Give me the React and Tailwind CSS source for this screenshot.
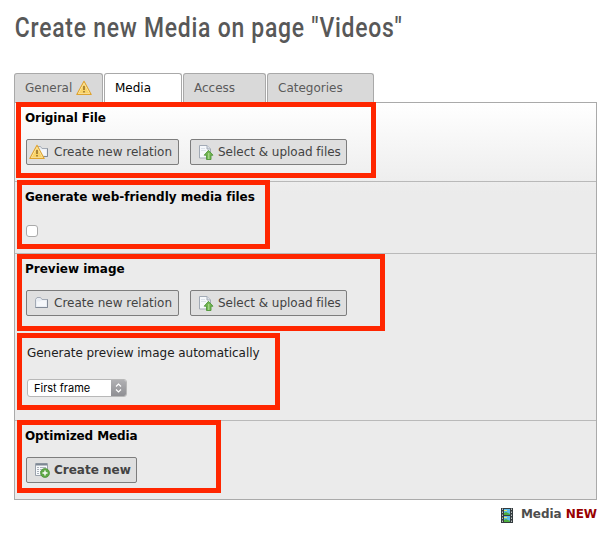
import React from "react";

function Warning({ className = "" }) {
  return (
    <svg width="16" height="16" viewBox="0 0 16 16" className={className}>
      <path d="M8 1.3 15.2 14.4H.8Z" fill="#fff3c4" stroke="#dfa32e" strokeWidth="1.1" strokeLinejoin="round" />
      <path d="M8 3.6 13.3 13.2H2.7Z" fill="#f9d367" />
      <path d="M8 6v4" stroke="#8a6420" strokeWidth="1.4" />
      <path d="M8 11v1.5" stroke="#8a6420" strokeWidth="1.4" />
    </svg>
  );
}

function Folder({ className = "" }) {
  return (
    <svg width="16" height="16" viewBox="0 0 16 16" className={className}>
      <path d="M1.5 12.5v-8L3 2.5h3.5L8 4.5h5.5v8Z" fill="#e9edf3" stroke="#a3aab5" />
      <path d="M3 6.5h3l1.5-1H12v5.5H3Z" fill="#f5f7fa" />
      <path d="M1.5 12.5h12v-8" fill="none" stroke="#828a97" />
    </svg>
  );
}

function Upload() {
  return (
    <svg width="16" height="16" viewBox="0 0 16 16">
      <path d="M1.5 1.5H9L12.5 5v9H1.5Z" fill="#f5f8fb" stroke="#a2aab5" />
      <path d="M9 1.5V5h3.5" fill="#dce2ea" stroke="#a2aab5" />
      <path d="M3 4.5h4M3 6.5h5" stroke="#dce2ea" />
      <path d="M10.5 6.3 15 11.2H13V15.500H8.500V11.200H6.200Z" fill="#72b552" stroke="#4f963a" strokeWidth=".9" strokeLinejoin="round" />
      <path d="M10.700 9v6" stroke="#a0d485" strokeWidth="1.400" />
    </svg>
  );
}

function AddRecord() {
  return (
    <svg width="16" height="16" viewBox="0 0 16 16">
      <path d="M1.500 1.500h12v12h-12Z" fill="#f7f9fb" stroke="#9aa1ab" />
      <path d="M2 2.500h11" stroke="#7d8692" strokeWidth="2" />
      <path d="M3 5.500h2M6 5.500h6M3 7.500h2M6 7.500h6M3 9.500h2M6 9.500h4M3 11.500h2" stroke="#aab1bb" />
      <circle cx="11" cy="11" r="4.500" fill="#5fa847" stroke="#4b9037" strokeWidth=".7" />
      <path d="M11 8.500v5M8.500 11h5" stroke="#fff" strokeWidth="1.400" />
    </svg>
  );
}

function Film() {
  return (
    <svg width="12" height="15" viewBox="0 0 12 15">
      <path d="M0 0h12v15H0Z" fill="#343b3e" />
      <path d="M1.500 .5v14M10.500 .5v14" stroke="#bcc2c2" strokeDasharray="1.500 1.500" />
      <path d="M3 1h6v6H3ZM3 8h6v6H3Z" fill="#5cbce9" />
      <path d="M3 5l2-1 4 2v1H3ZM3 12l2-1 4 2v1H3Z" fill="#4eae3c" />
      <path d="M3 2h3v1H3ZM3 9h3v1H3Z" fill="#e9e765" />
    </svg>
  );
}

function Tab({ label, active, className, children }) {
  return (
    <div
      className={`flex h-[29px] items-center rounded-t-[3px] border border-b-0 border-[#a9a9a9] pl-2.5 text-[12px] ${
        active ? "bg-white text-black" : "bg-[#d9d9d9] text-[#5b5b5b]"
      } ${className}`}
    >
      <span>{label}</span>
      {children}
    </div>
  );
}

function Button({ icon, children, className }) {
  return (
    <button
      className={`flex h-[26px] items-center rounded-[2px] border border-[#7d7d7d] bg-[#dfdfdf] pl-[7px] text-[12px] text-[#434343] ${className}`}
    >
      <span className="relative mr-1 block h-4 w-4 shrink-0">{icon}</span>
      {children}
    </button>
  );
}

function FileButtons({ warning }) {
  return (
    <div className="flex gap-[11px] pl-[11px]">
      <Button
        className="w-[153px]"
        icon={
          <>
            <Folder />
            {warning && <Warning className="absolute top-0 -left-[5px]" />}
          </>
        }
      >
        Create new relation
      </Button>
      <Button className="w-[157px] tracking-[-0.02px]" icon={<Upload />}>
        Select &amp; upload files
      </Button>
    </div>
  );
}

function Heading({ children, className }) {
  return <h2 className={`h-4 pl-[10px] text-[12px] leading-4 font-bold text-black ${className}`}>{children}</h2>;
}

function Marker({ className }) {
  return <div className={`pointer-events-none absolute border-[5px] border-[#ff2600] ${className}`} />;
}

export default function App() {
  return (
    <main className="relative h-[549px] w-[610px] overflow-hidden bg-white pl-[14px] font-['DejaVu_Sans',sans-serif] whitespace-nowrap">
      <h1 className="h-[73px] w-max origin-left scale-x-[0.85] pt-[10px] pl-px font-['Roboto',sans-serif] text-[27px] leading-[36px] font-medium tracking-[0.87px] text-[#585858]">
        Create new Media on page "Videos"
      </h1>
      <nav className="flex gap-px">
        <Tab label="General" className="w-[89px]">
          <Warning className="ml-1" />
        </Tab>
        <Tab label="Media" active className="w-[78px]" />
        <Tab label="Access" className="w-[83px]" />
        <Tab label="Categories" className="w-[107px]" />
      </nav>
      <div className="h-[398px] w-[583px] border border-[#aaaaaa] bg-[#ebebeb] bg-[linear-gradient(#ffffff,#ebebeb_90px)]">
        <section className="h-[79px] border-b border-[#b9b9b9] pt-[7px]">
          <Heading className="mb-[13px] tracking-[-0.12px]">Original File</Heading>
          <FileButtons warning />
        </section>
        <section className="h-[72px] border-b border-[#b9b9b9] pt-[7px]">
          <Heading className="tracking-[-0.02px]">Generate web-friendly media files</Heading>
          <div className="mt-5 ml-[11px] h-3 w-3 rounded-[3px] border border-[#aaaaaa] bg-white" />
        </section>
        <section className="h-[167px] border-b border-[#b9b9b9] pt-[7px]">
          <Heading className="mb-[13px]">Preview image</Heading>
          <FileButtons />
          <p className="mt-[29px] h-4 pl-[12px] text-[12px] leading-4 tracking-[-0.04px] text-[#202020]">
            Generate preview image automatically
          </p>
          <div className="mt-[18px] ml-3 flex h-[18px] w-[100px] items-center overflow-hidden rounded-[3px] border border-[#b8b8b8] bg-white pl-[6px] font-['Inter',sans-serif] text-[11px] text-black">
            <span>First frame</span>
            <span className="ml-auto flex h-[18px] w-[15px] items-center justify-center bg-[linear-gradient(#b2b2b5,#8d8d91)]">
              <svg width="9" height="12" viewBox="0 0 9 12">
                <path d="m2 4.500 2.500-2.500L7 4.500M2 7.500 4.500 10 7 7.500" fill="none" stroke="#fff" strokeWidth="1.200" />
              </svg>
            </span>
          </div>
        </section>
        <section className="pt-[7px]">
          <Heading className="mb-[13px] tracking-[-0.1px]">Optimized Media</Heading>
          <div className="pl-[11px]">
            <Button className="w-[111px] font-bold" icon={<AddRecord />}>
              Create new
            </Button>
          </div>
        </section>
      </div>
      <footer className="mt-[5px] flex h-[18px] w-[583px] items-center justify-end text-[12px] font-bold tracking-[-0.05px] text-[#4d4d4d]">
        <span className="mt-[3px] mr-2">
          <Film />
        </span>
        <span>
          Media <strong className="text-[#990000]">NEW</strong>
        </span>
      </footer>
      <Marker className="top-[102px] left-[16px] h-[76px] w-[360px]" />
      <Marker className="top-[180px] left-[17px] h-[69px] w-[253px]" />
      <Marker className="top-[254px] left-[17px] h-[77px] w-[368px]" />
      <Marker className="top-[333px] left-[17px] h-[77px] w-[263px]" />
      <Marker className="top-[420px] left-[17px] h-[73px] w-[204px]" />
    </main>
  );
}
